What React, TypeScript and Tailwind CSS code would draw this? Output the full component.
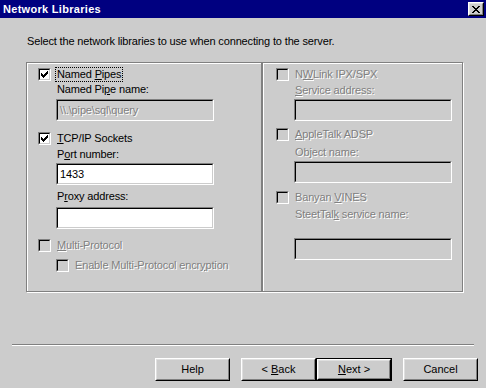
import React from "react";

const FONT = { fontFamily: '"Liberation Sans", Arial, sans-serif' };

function Check({ checked, disabled }: { checked?: boolean; disabled?: boolean }) {
  const pts = [
    [6, 0], [5, 1], [6, 1], [0, 2], [4, 2], [5, 2], [6, 2],
    [0, 3], [1, 3], [3, 3], [4, 3], [5, 3],
    [0, 4], [1, 4], [2, 4], [3, 4], [4, 4],
    [1, 5], [2, 5], [3, 5], [2, 6],
  ];
  return (
    <div className="w-[13px] h-[13px] shrink-0 border border-t-[#808080] border-l-[#808080] border-b-white border-r-white">
      <div
        className={`w-full h-full border border-t-black border-l-black border-b-[#cccccc] border-r-[#cccccc] flex items-center justify-center ${
          disabled ? "bg-[#cccccc]" : "bg-white"
        }`}
      >
        {checked && (
          <svg width="7" height="7" viewBox="0 0 7 7" shapeRendering="crispEdges">
            {pts.map(([x, y], i) => (
              <rect key={i} x={x} y={y} width="1" height="1" fill="#000" />
            ))}
          </svg>
        )}
      </div>
    </div>
  );
}

function Box({ disabled, children }: { disabled?: boolean; children?: React.ReactNode }) {
  return (
    <div className="w-[158px] h-[22px] border border-t-[#808080] border-l-[#808080] border-b-white border-r-white">
      <div
        className={`w-full h-full border border-t-black border-l-black border-b-[#cccccc] border-r-[#cccccc] flex items-center pl-[2px] ${
          disabled ? "bg-[#cccccc]" : "bg-white"
        }`}
      >
        {children}
      </div>
    </div>
  );
}

function T({ disabled, children, className = "" }: { disabled?: boolean; children: React.ReactNode; className?: string }) {
  return (
    <span
      className={`block leading-[13px] whitespace-nowrap tracking-[-0.15px] ${
        disabled ? "text-[#808080] [text-shadow:1px_1px_0_#ffffff]" : "text-black"
      } ${className}`}
    >
      {children}
    </span>
  );
}

function U({ children }: { children: React.ReactNode }) {
  return <span className="underline underline-offset-[1px]">{children}</span>;
}

function Btn({ children, def }: { children: React.ReactNode; def?: boolean }) {
  const inner = (
    <div className="w-full h-full border border-t-white border-l-white border-b-black border-r-black">
      <div className="w-full h-full border border-t-[#dfdfdf] border-l-[#dfdfdf] border-b-[#808080] border-r-[#808080] flex items-center justify-center text-black">
        <span className="whitespace-pre leading-[13px]">{children}</span>
      </div>
    </div>
  );
  if (def) {
    return <div className="w-[76px] h-[23px] border border-black">{inner}</div>;
  }
  return <div className="w-[75px] h-[23px]">{inner}</div>;
}

export default function App() {
  return (
    <div className="w-[486px] h-[388px] bg-[#cccccc] text-[11px] leading-[13px] flex flex-col overflow-hidden" style={FONT}>
      {/* Title bar */}
      <div className="h-[18px] bg-[#000080] flex items-center justify-between">
        <span className="pl-[3px] text-white font-bold text-[11px] leading-[13px] tracking-[0.3px]">Network Libraries</span>
        <div className="w-[16px] h-[14px] mr-[2px] border border-t-white border-l-white border-b-black border-r-black bg-[#cccccc]">
          <div className="w-full h-full border border-t-[#dfdfdf] border-l-[#dfdfdf] border-b-[#808080] border-r-[#808080] flex items-center justify-center">
            <svg width="8" height="7" viewBox="0 0 8 7" shapeRendering="crispEdges">
              <path
                d="M0 0h2v1h-2zM6 0h2v1h-2zM1 1h2v1h-2zM5 1h2v1h-2zM2 2h4v1h-4zM3 3h2v1h-2zM2 4h4v1h-4zM1 5h2v1h-2zM5 5h2v1h-2zM0 6h2v1h-2zM6 6h2v1h-2z"
                fill="#000"
              />
            </svg>
          </div>
        </div>
      </div>

      {/* Instruction */}
      <div className="pl-[27px] mt-[17px]">
        <T>Select the network libraries to use when connecting to the server.</T>
      </div>

      {/* Group boxes */}
      <div className="flex ml-[26px] mt-[14px]">
        <div className="w-[236px] h-[230px] border border-[#808080] shadow-[inset_1px_1px_0_#ffffff,1px_1px_0_#ffffff] flex flex-col pl-[11px] pt-[5px]">
          <div className="flex items-center gap-[5px]">
            <Check checked />
            <T className="outline outline-1 outline-dotted outline-black px-[1px]">
              Named <U>P</U>ipes
            </T>
          </div>
          <div className="pl-[19px] mt-[2px]">
            <T>
              Named Pi<U>p</U>e name:
            </T>
          </div>
          <div className="pl-[18px] mt-[3px]">
            <Box disabled>
              <T disabled>\\.\pipe\sql\query</T>
            </Box>
          </div>
          <div className="flex items-center gap-[6px] mt-[11px]">
            <Check checked />
            <T>
              <U>T</U>CP/IP Sockets
            </T>
          </div>
          <div className="pl-[19px] mt-[3px]">
            <T>
              P<U>o</U>rt number:
            </T>
          </div>
          <div className="pl-[18px] mt-[2px]">
            <Box>
              <T>1433</T>
            </Box>
          </div>
          <div className="pl-[19px] mt-[5px]">
            <T>
              P<U>r</U>oxy address:
            </T>
          </div>
          <div className="pl-[18px] mt-[4px]">
            <Box />
          </div>
          <div className="flex items-center gap-[6px] mt-[10px]">
            <Check disabled />
            <T disabled>
              <U>M</U>ulti-Protocol
            </T>
          </div>
          <div className="flex items-center gap-[6px] mt-[7px] pl-[18px]">
            <Check disabled />
            <T disabled>
              Enable Multi-Protocol encr<U>y</U>ption
            </T>
          </div>
        </div>

        <div className="w-[201px] h-[230px] border border-[#808080] shadow-[inset_1px_1px_0_#ffffff,1px_1px_0_#ffffff] flex flex-col pl-[13px] pt-[5px]">
          <div className="flex items-center gap-[6px]">
            <Check disabled />
            <T disabled>
              N<U>W</U>Link IPX/SPX
            </T>
          </div>
          <div className="pl-[19px] mt-[3px]">
            <T disabled>
              <U>S</U>ervice address:
            </T>
          </div>
          <div className="pl-[18px] mt-[2px]">
            <Box disabled />
          </div>
          <div className="flex items-center gap-[6px] mt-[7px]">
            <Check disabled />
            <T disabled>
              <U>A</U>ppleTalk ADSP
            </T>
          </div>
          <div className="pl-[19px] mt-[5px]">
            <T disabled>
              Ob<U>j</U>ect name:
            </T>
          </div>
          <div className="pl-[18px] mt-[2px]">
            <Box disabled />
          </div>
          <div className="flex items-center gap-[6px] mt-[8px]">
            <Check disabled />
            <T disabled>
              Banyan <U>V</U>INES
            </T>
          </div>
          <div className="pl-[19px] mt-[4px]">
            <T disabled>
              SteetTal<U>k</U> service name:
            </T>
          </div>
          <div className="pl-[18px] mt-[17px]">
            <Box disabled />
          </div>
        </div>
      </div>

      {/* Separator */}
      <div className="mx-[12px] mt-[52px] h-[2px] border-t border-t-[#808080] border-b border-b-white" />

      {/* Buttons */}
      <div className="flex ml-[155px] mt-[12px]">
        <Btn>Help</Btn>
        <div className="w-[11px]" />
        <Btn>
          {"< "}
          <U>B</U>ack
        </Btn>
        <Btn def>
          <U>N</U>ext{" >"}
        </Btn>
        <div className="w-[11px]" />
        <Btn>Cancel</Btn>
      </div>
    </div>
  );
}
